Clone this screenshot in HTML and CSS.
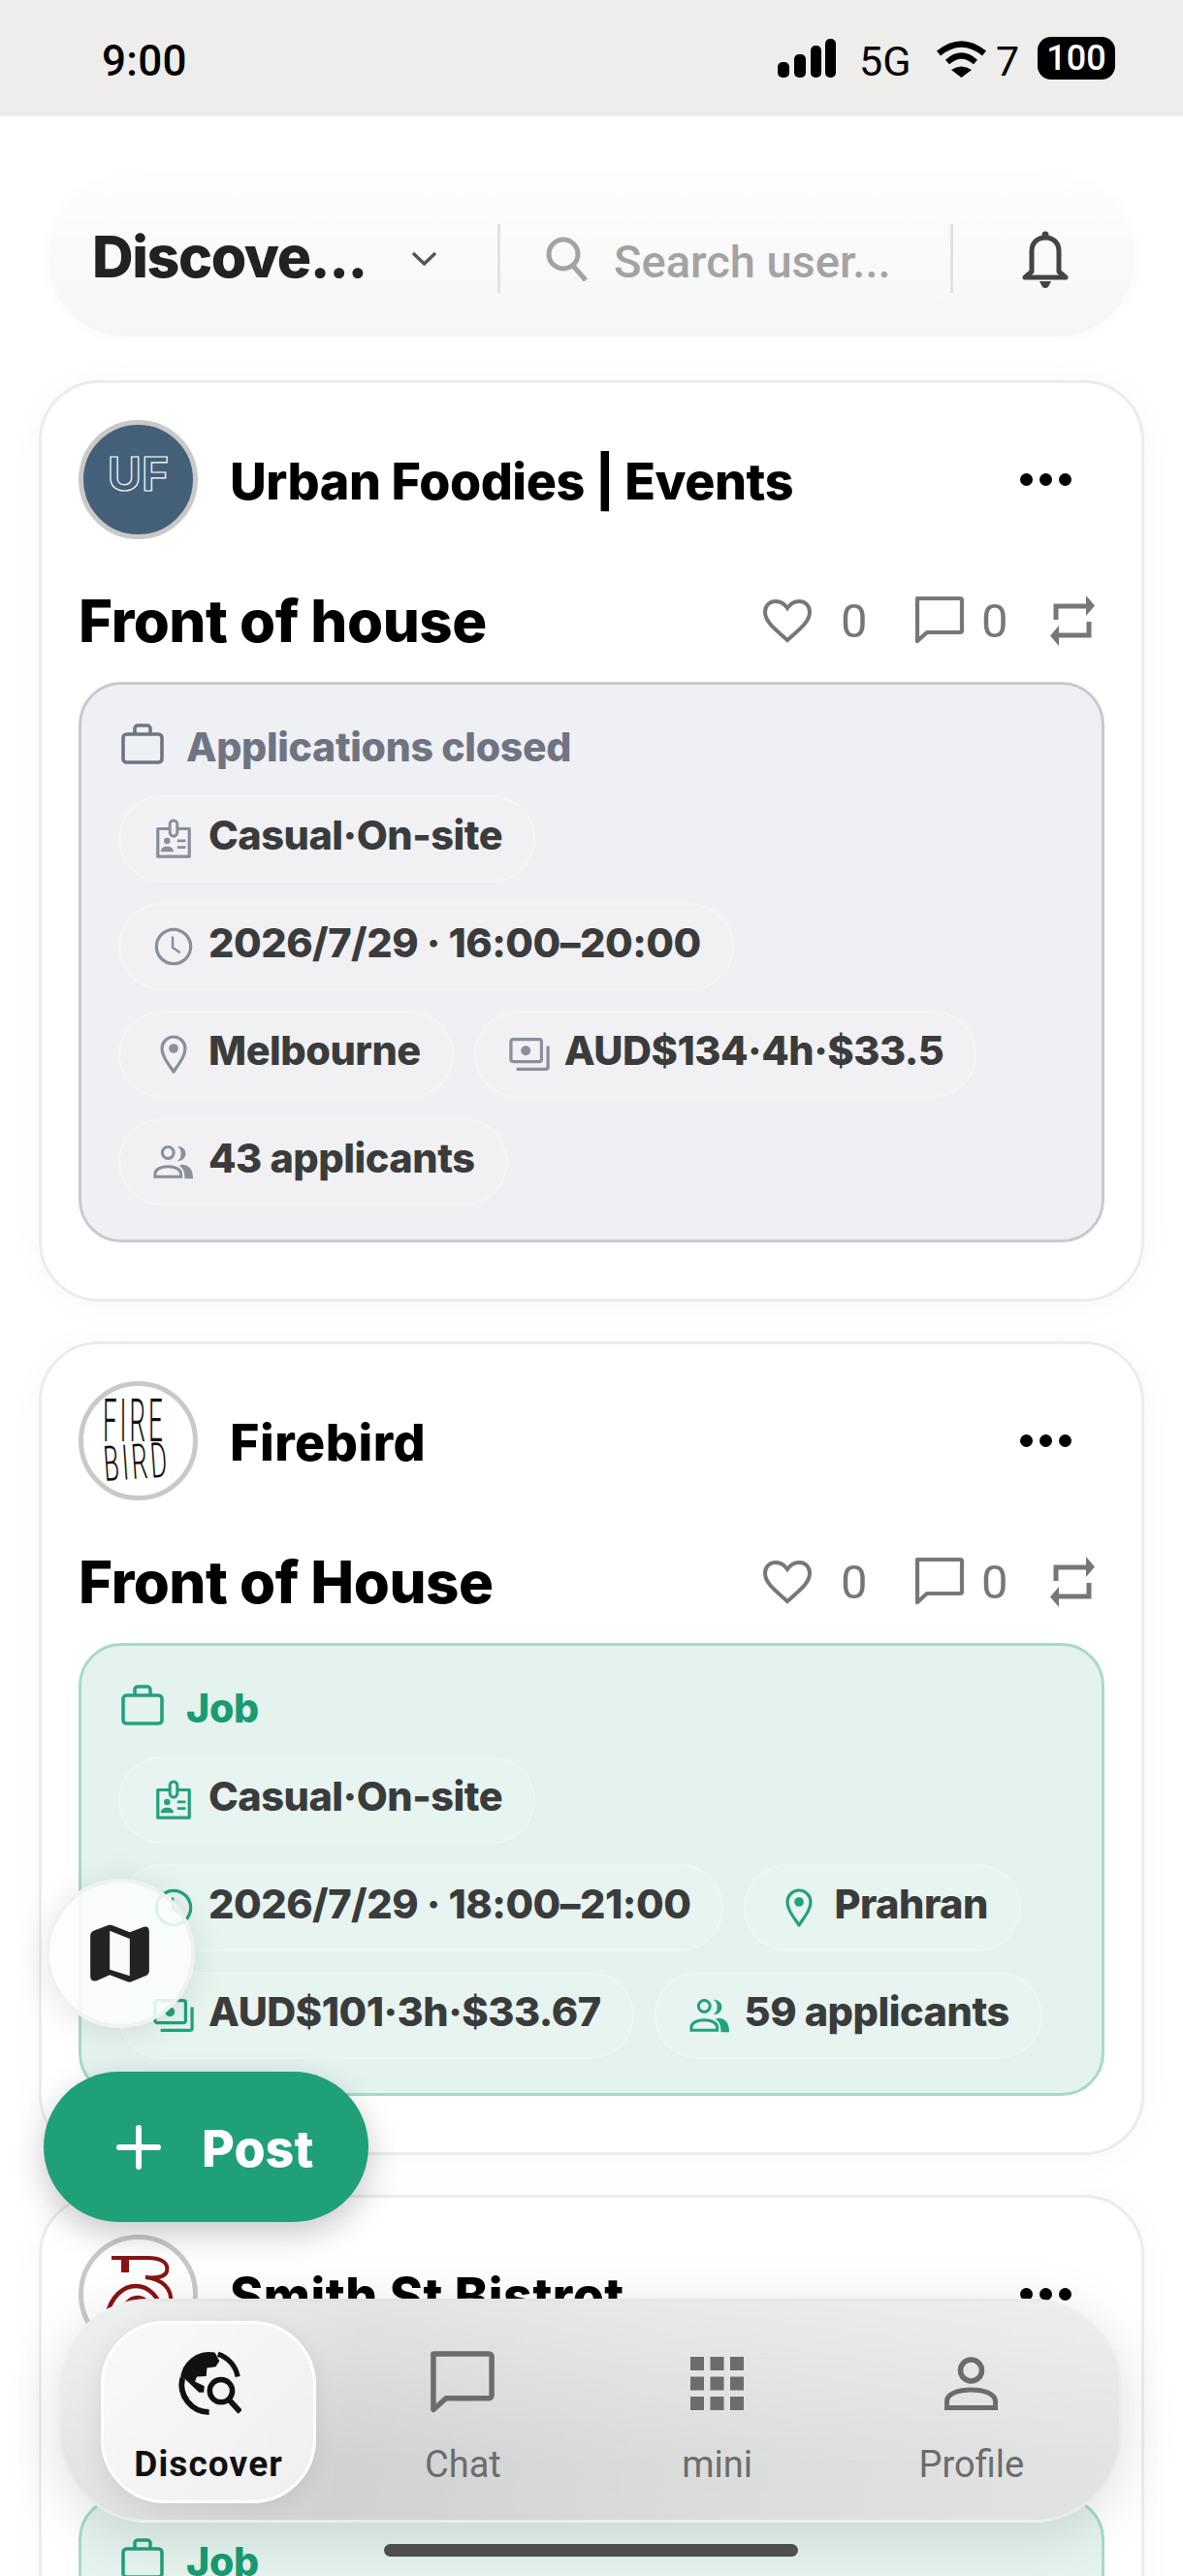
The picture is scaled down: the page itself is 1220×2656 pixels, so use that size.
FILE: index.html
```html
<!DOCTYPE html>
<html lang="en">
<head>
<meta charset="utf-8">
<title>Discover</title>
<link rel="stylesheet" href="styles.css">
</head>
<body>
<svg class="sprite" width="0" height="0" aria-hidden="true">
  <symbol id="i-bag" viewBox="0 0 44 42"><path d="M14 11V5a3 3 0 0 1 3-3h10a3 3 0 0 1 3 3v6" fill="none" stroke="currentColor" stroke-width="3.5"/><rect x="2" y="11" width="40" height="29" rx="3.5" fill="none" stroke="currentColor" stroke-width="3.6"/></symbol>
  <symbol id="i-badge" viewBox="0 0 40 44"><path d="M15 11H3v30h34V11H25" fill="none" stroke="currentColor" stroke-width="3.4" stroke-linejoin="round"/><rect x="16" y="2" width="8" height="17" rx="4" fill="none" stroke="currentColor" stroke-width="3.2"/><circle cx="13" cy="24" r="3.4" fill="currentColor"/><path d="M6 36c0-4 3-6 7-6s7 2 7 6z" fill="currentColor"/><path d="M24 24h9M24 31h9" stroke="currentColor" stroke-width="3"/></symbol>
  <symbol id="i-clock" viewBox="0 0 42 44"><circle cx="21" cy="22" r="18.500" fill="none" stroke="currentColor" stroke-width="3.4"/><path d="M20 11v12l8 5.500" fill="none" stroke="currentColor" stroke-width="2.6"/></symbol>
  <symbol id="i-pin" viewBox="0 0 30 42"><path d="M15 39C9 30 3 23 3 15a12 12 0 0 1 24 0c0 8-6 15-12 24z" fill="none" stroke="currentColor" stroke-width="3.2" stroke-linejoin="round"/><circle cx="15" cy="15" r="4.800" fill="currentColor"/></symbol>
  <symbol id="i-money" viewBox="0 0 44 36"><rect x="2" y="2" width="33" height="24" rx="2.500" fill="none" stroke="currentColor" stroke-width="3.4"/><circle cx="18" cy="14" r="5.200" fill="currentColor"/><path d="M42 9v23a2 2 0 0 1-2 2H8" fill="none" stroke="currentColor" stroke-width="3.4"/></symbol>
  <symbol id="i-people" viewBox="0 0 44 38"><circle cx="16" cy="9" r="6.200" fill="none" stroke="currentColor" stroke-width="3.2"/><path d="M2 35v-3c0-5 6-8 14-8s14 3 14 8v3z" fill="none" stroke="currentColor" stroke-width="3.2"/><path d="M26 2c6 0 9 4 9 8s-3 8-9 8c3-2 4-5 4-8s-1-6-4-8z" fill="currentColor"/><path d="M32 22c7 1 11 5 11 15h-9c0-6-1-11-6-14z" fill="currentColor"/></symbol>
  <symbol id="i-comment" viewBox="0 0 52 52"><path d="M3 3h44a2 2 0 0 1 2 2v31a2 2 0 0 1-2 2H13L3 47z" fill="none" stroke="currentColor" stroke-width="4.2" stroke-linejoin="round"/></symbol>
</svg>

<div class="screen">
  <header class="statusbar">
    <span class="status-time">9:00</span>
    <div class="status-right">
      <svg class="i-signal" viewBox="0 0 60 40"><rect x="0" y="24" width="12" height="16" rx="5"/><rect x="17" y="16" width="12" height="24" rx="5"/><rect x="34" y="7" width="11" height="33" rx="5"/><rect x="49" y="0" width="11" height="40" rx="5"/></svg>
      <span class="status-5g">5G</span>
      <svg class="i-wifi" viewBox="0 0 53 40"><path d="M3 15Q26.500-4 50 15" fill="none" stroke="#000" stroke-width="6.500"/><path d="M12 24Q26.500 11 41 24" fill="none" stroke="#000" stroke-width="6"/><path d="M16 32Q26.500 25 37 32L26.500 40z"/></svg>
      <span class="status-7">7</span>
      <span class="battery">100</span>
    </div>
  </header>

  <div class="topbar">
    <span class="topbar-title">Discove...</span>
    <svg class="i-chevron" viewBox="0 0 27 15"><path d="M2 2l11.500 11L25 2" fill="none" stroke="#555" stroke-width="3.400"/></svg>
    <span class="topbar-divider"></span>
    <svg class="i-search" viewBox="0 0 44 46"><circle cx="18" cy="18" r="15" fill="none" stroke="#a3a3a3" stroke-width="5"/><path d="M28 30l13 15" stroke="#a3a3a3" stroke-width="5"/></svg>
    <span class="topbar-search">Search user...</span>
    <span class="topbar-divider topbar-divider--end"></span>
    <svg class="i-bell" viewBox="0 0 50 60"><circle cx="25" cy="5" r="3.500" fill="#444"/><path d="M11 43V22c0-9 6-14 14-14s14 5 14 14v21l7 6H4z" fill="none" stroke="#444" stroke-width="5" stroke-linejoin="round"/><path d="M19 53h12l-2.500 5a4 4 0 0 1-7 0z" fill="#444"/></svg>
  </div>

  <main class="feed">
    <article class="card">
      <div class="card-head">
        <div class="avatar avatar--uf">
          <svg viewBox="0 0 113 113"><text x="56.500" y="68" class="uf-text" text-anchor="middle">UF</text></svg>
        </div>
        <h2 class="card-name">Urban Foodies | Events</h2>
        <div class="dots"><i></i><i></i><i></i></div>
      </div>
      <div class="card-title-row">
        <h3 class="card-title">Front of house</h3>
        <div class="actions">
          <svg class="i-heart" viewBox="0 0 52 46"><path d="M26 43C10 29 3 23 3 14 3 7 8 3 14 3c5 0 9 2.500 12 7 3-4.500 7-7 12-7 6 0 11 4 11 11 0 9-7 15-23 29z" fill="none" stroke="currentColor" stroke-width="4"/></svg>
          <span class="count count--like">0</span>
          <svg class="i-comment"><use href="#i-comment"/></svg>
          <span class="count count--comment">0</span>
          <svg class="i-repost" viewBox="0 0 48 52"><path d="M7 25V11h32M41 27v14H9" fill="none" stroke="currentColor" stroke-width="5"/><path d="M38 0l9 10.500-9 10.500zM10 31l-9 10.500L10 52z" fill="currentColor"/></svg>
        </div>
      </div>
      <section class="box box--closed">
        <div class="box-label"><svg class="i-bag"><use href="#i-bag"/></svg><span>Applications closed</span></div>
        <div class="chips">
          <div class="chip"><svg class="chip-icon"><use href="#i-badge"/></svg><span>Casual·On-site</span></div>
          <div class="chip"><svg class="chip-icon"><use href="#i-clock"/></svg><span>2026/7/29 · 16:00–20:00</span></div>
          <div class="chip"><svg class="chip-icon"><use href="#i-pin"/></svg><span>Melbourne</span></div>
          <div class="chip"><svg class="chip-icon"><use href="#i-money"/></svg><span>AUD$134·4h·$33.5</span></div>
          <div class="chip"><svg class="chip-icon"><use href="#i-people"/></svg><span>43 applicants</span></div>
        </div>
      </section>
    </article>

    <article class="card">
      <div class="card-head">
        <div class="avatar">
          <svg viewBox="0 0 113 113"><text class="fb-text" transform="translate(20 57) scale(1 2.35)">FIRE</text><text class="fb-text" transform="translate(22 98) rotate(-4) scale(1 1.95)">BIRD</text></svg>
        </div>
        <h2 class="card-name card-name--loose">Firebird</h2>
        <div class="dots"><i></i><i></i><i></i></div>
      </div>
      <div class="card-title-row">
        <h3 class="card-title">Front of House</h3>
        <div class="actions">
          <svg class="i-heart" viewBox="0 0 52 46"><path d="M26 43C10 29 3 23 3 14 3 7 8 3 14 3c5 0 9 2.500 12 7 3-4.500 7-7 12-7 6 0 11 4 11 11 0 9-7 15-23 29z" fill="none" stroke="currentColor" stroke-width="4"/></svg>
          <span class="count count--like">0</span>
          <svg class="i-comment"><use href="#i-comment"/></svg>
          <span class="count count--comment">0</span>
          <svg class="i-repost" viewBox="0 0 48 52"><path d="M7 25V11h32M41 27v14H9" fill="none" stroke="currentColor" stroke-width="5"/><path d="M38 0l9 10.500-9 10.500zM10 31l-9 10.500L10 52z" fill="currentColor"/></svg>
        </div>
      </div>
      <section class="box box--job">
        <div class="box-label"><svg class="i-bag"><use href="#i-bag"/></svg><span>Job</span></div>
        <div class="chips">
          <div class="chip"><svg class="chip-icon"><use href="#i-badge"/></svg><span>Casual·On-site</span></div>
          <div class="chip"><svg class="chip-icon"><use href="#i-clock"/></svg><span>2026/7/29 · 18:00–21:00</span></div>
          <div class="chip"><svg class="chip-icon"><use href="#i-pin"/></svg><span>Prahran</span></div>
          <div class="chip"><svg class="chip-icon"><use href="#i-money"/></svg><span>AUD$101·3h·$33.67</span></div>
          <div class="chip"><svg class="chip-icon"><use href="#i-people"/></svg><span>59 applicants</span></div>
        </div>
      </section>
    </article>

    <article class="card">
      <div class="card-head">
        <div class="avatar">
          <svg viewBox="0 0 113 113"><path d="M29 19H66C82 19 88 25 86 33 84 39 74 40 64 39 81 41 92 50 90 66" fill="none" stroke="#8a1414" stroke-width="4"/><rect x="39" y="19" width="8" height="15" fill="#8a1414"/><path d="M24 80C28 58 42 48 54 48S80 58 82 80M36 82C40 68 48 60 56 60S70 68 72 80" fill="none" stroke="#8a1414" stroke-width="4.500"/></svg>
        </div>
        <h2 class="card-name card-name--loose">Smith St Bistrot</h2>
        <div class="dots"><i></i><i></i><i></i></div>
      </div>
      <div class="card-title-row"></div>
      <section class="box box--job">
        <div class="box-label"><svg class="i-bag"><use href="#i-bag"/></svg><span>Job</span></div>
      </section>
    </article>
  </main>

  <button class="fab-map" type="button" aria-label="Map">
    <svg viewBox="70 65 185 183"><path d="M70 100q0-10 10-15l45-17q6-2 12 0l55 22 43-17q17-4 17 15v122q0 10-10 14l-45 19q-6 2-12 0l-55-21-40 18q-20 4-20-15z" fill="#222423"/><path d="M130 85l62 25v115l-62-20z" fill="#f8fbfa"/></svg>
  </button>

  <button class="fab-post" type="button">
    <svg viewBox="0 0 46 46"><path d="M23 3v40M3 23h40" stroke="#fff" stroke-width="6" stroke-linecap="round"/></svg>
    <span>Post</span>
  </button>

  <nav class="tabbar">
    <a class="tab tab--active">
      <svg class="tab-icon" viewBox="60 65 210 210"><path d="M75 160A92 92 0 0 1 185 73l15 27-12 18-28 4-2 26-30 2-6 15 30 15-2 20h-15L88 155z" fill="#111"/><path d="M82 155a88 88 0 0 0 85 108" fill="none" stroke="#111" stroke-width="18"/><path d="M195 78a92 92 0 0 1 63 72" fill="none" stroke="#111" stroke-width="16"/><circle cx="205" cy="195" r="36" fill="none" stroke="#111" stroke-width="17"/><path d="M232 225l34 37" stroke="#111" stroke-width="18"/></svg>
      <span>Discover</span>
    </a>
    <a class="tab">
      <svg class="tab-icon tab-icon--chat"><use href="#i-comment"/></svg>
      <span>Chat</span>
    </a>
    <a class="tab">
      <svg class="tab-icon tab-icon--small" viewBox="0 0 55 55" fill="currentColor"><rect x="0" y="0" width="14" height="14"/><rect x="20.500" y="0" width="14" height="14"/><rect x="41" y="0" width="14" height="14"/><rect x="0" y="20.500" width="14" height="14"/><rect x="20.500" y="20.500" width="14" height="14"/><rect x="41" y="20.500" width="14" height="14"/><rect x="0" y="41" width="14" height="14"/><rect x="20.500" y="41" width="14" height="14"/><rect x="41" y="41" width="14" height="14"/></svg>
      <span>mini</span>
    </a>
    <a class="tab">
      <svg class="tab-icon tab-icon--small" viewBox="0 0 55 55"><circle cx="27.500" cy="14" r="11" fill="none" stroke="currentColor" stroke-width="5.500"/><path d="M2.500 52.500V46c0-8 12-12 25-12s25 4 25 12v6.500z" fill="none" stroke="currentColor" stroke-width="5"/></svg>
      <span>Profile</span>
    </a>
  </nav>
  <div class="home-indicator"></div>
</div>
</body>
</html>
```

FILE: styles.css
```css
* { box-sizing: border-box; }
html, body { margin: 0; padding: 0; background: #fff; }
body { font-family: "Inter", "Liberation Sans", sans-serif; color: #000; }
.sprite { position: absolute; }
.screen { position: relative; width: 1220px; height: 2656px; overflow: hidden; background: #fff; }

/* status bar */
.statusbar { display: flex; align-items: center; justify-content: space-between; height: 120px; padding: 0 70px 0 105px; background: #eeedeb; font-family: "Roboto", sans-serif; }
.status-time { padding-top: 6px; font-size: 44px; font-weight: 500; letter-spacing: .3px; }
.status-right { display: flex; align-items: center; }
.i-signal { width: 60px; height: 40px; margin-right: 24px; }
.status-5g { width: 52px; margin-right: 27px; padding-top: 6px; font-size: 43px; }
.i-wifi { width: 53px; height: 40px; margin-right: 9px; }
.status-7 { width: 21px; margin-right: 22px; padding-top: 6px; font-size: 43px; }
.battery { display: flex; align-items: center; justify-content: center; width: 80px; height: 44px; border-radius: 14px; background: #000; color: #fff; font-size: 36px; font-weight: 500; }

/* top bar */
.topbar { display: flex; align-items: center; width: 1120px; height: 161px; margin: 66px 0 0 50px; padding-left: 45px; border-radius: 80px; background: linear-gradient(#fdfdfd, #f6f6f6); box-shadow: 0 0 12px 4px #fbfbfb; }
.topbar-title { width: 281px; padding-bottom: 5px; font-size: 59px; font-weight: 800; letter-spacing: -1.4px; color: #222; white-space: nowrap; }
.i-chevron { width: 27px; height: 15px; margin-left: 48px; }
.topbar-divider { width: 3px; height: 71px; margin-left: 62px; background: #e2e2e2; }
.i-search { width: 44px; height: 46px; margin-left: 47px; }
.topbar-search { margin-left: 26px; width: 347px; padding-top: 6px; font-family: "Roboto", sans-serif; font-size: 47px; font-weight: 500; color: #a3a3a3; white-space: nowrap; }
.topbar-divider--end { margin-left: 0; }
.i-bell { width: 50px; height: 60px; margin-left: 70px; }

/* feed */
.feed { display: flex; flex-direction: column; gap: 41px; padding: 45px 40px 0; }
.card { padding: 38px 38px 58px; border: 3px solid #ececec; border-radius: 62px; background: #fff; box-shadow: 0 2px 34px rgba(0, 0, 0, .035); }
.card-head { display: flex; align-items: center; height: 123px; }
.avatar { flex: none; width: 123px; height: 123px; border: 5px solid #c9c9c9; border-radius: 50%; background: #fff; overflow: hidden; }
.avatar svg { display: block; width: 100%; height: 100%; }
.avatar--uf { background: #436078; }
.uf-text { font-family: "Inter", sans-serif; font-size: 48px; font-weight: 700; fill: #436078; stroke: #fff; stroke-width: 1.2px; }
.fb-text { font-family: "Roboto", sans-serif; font-size: 26px; font-weight: 300; fill: #111; letter-spacing: 3px; }
.card-name { margin: 5px 0 0 33px; font-size: 52px; font-weight: 800; letter-spacing: -.45px; line-height: 1.2; white-space: nowrap; }
.card-name--loose { letter-spacing: .5px; }
.dots { display: flex; gap: 7px; margin: 0 34px 0 auto; }
.dots i { display: block; width: 13px; height: 13px; border-radius: 50%; background: #000; }
.card-title-row { display: flex; align-items: center; justify-content: space-between; height: 80px; margin: 44px 0 23px; }
.card-title { margin: 0; font-size: 60px; font-weight: 800; letter-spacing: -.5px; line-height: 80px; white-space: nowrap; }
.actions { display: flex; align-items: center; padding-right: 9px; color: #777; }
.i-heart { width: 52px; height: 46px; }
.i-comment { width: 52px; height: 52px; margin-left: 50px; }
.i-repost { width: 48px; height: 52px; margin-left: 44px; }
.count { width: 26px; font-family: "Roboto", sans-serif; font-size: 49px; font-weight: 400; line-height: 1; }
.count--like { margin-left: 29px; }
.count--comment { margin-left: 17px; }

/* info box */
.box { padding: 36px 38px 35px; border: 3px solid; border-radius: 44px; }
.box--closed { background: #eff0f3; border-color: #c8c9cf; --accent: #8a8f9b; --label: #6e7482; }
.box--job { background: #e4f3ee; border-color: #a8d9c8; --accent: #22a27c; --label: #1a9b72; }
.box-label { display: flex; align-items: center; gap: 23px; height: 50px; margin: 0 0 28px 3px; color: var(--label); font-size: 41px; font-weight: 800; letter-spacing: -.3px; white-space: nowrap; }
.box-label span { padding-top: 6px; }
.i-bag { flex: none; width: 44px; height: 42px; color: var(--accent); }
.box--closed .i-bag { color: var(--label); }
.chips { display: flex; flex-wrap: wrap; gap: 21px; }
.chip { display: flex; align-items: center; gap: 15px; height: 90px; padding: 0 32px 0 34px; border: 2px solid rgba(255, 255, 255, .22); border-radius: 45px; background: rgba(255, 255, 255, .12); color: #3a3c3c; font-size: 41.500px; font-weight: 800; letter-spacing: -.5px; white-space: nowrap; }
.chip span { padding-bottom: 9px; }
.chip-icon { flex: none; width: 42px; height: 42px; color: var(--accent); }

/* floating buttons */
.fab-map { position: absolute; left: 47px; top: 1937px; display: flex; align-items: center; justify-content: center; width: 154px; height: 154px; padding: 0; border: 4px solid rgba(238, 240, 239, .9); border-radius: 50%; background: rgba(252, 253, 253, .88); box-shadow: 0 4px 36px rgba(0, 0, 0, .1); }
.fab-map svg { width: 62px; height: 61px; }
.fab-post { position: absolute; left: 45px; top: 2136px; display: flex; align-items: center; gap: 42px; width: 335px; height: 155px; padding: 0 0 0 75px; border: 0; border-radius: 78px; background: #1fa079; box-shadow: 0 12px 34px rgba(0, 0, 0, .22); color: #fff; font-family: "Inter", sans-serif; font-size: 52px; font-weight: 800; }
.fab-post span { padding-top: 3px; }
.fab-post svg { width: 46px; height: 46px; }

/* tab bar */
.tabbar { position: absolute; left: 61px; top: 2370px; display: flex; gap: 40px; width: 1096px; height: 231px; padding: 20px 41px 0 40px; border: 3px solid rgba(240, 241, 241, .5); border-radius: 92px; background: linear-gradient(180deg, rgba(255, 255, 255, .4), rgba(255, 255, 255, 0) 75%), linear-gradient(100deg, #e6e7e7 0%, #d0d2d1 28%, #d9dbda 55%, #e2e3e3 100%); box-shadow: 0 12px 60px rgba(0, 0, 0, .13); }
.tab { display: flex; flex-direction: column; align-items: center; width: 223px; height: 188px; padding-top: 27px; border: 3px solid transparent; border-radius: 66px; color: #6c6c6c; font-family: "Roboto", sans-serif; font-size: 38px; font-weight: 400; line-height: 44px; }
.tab span { margin-top: 28px; }
.tab-icon { flex: none; width: 68px; height: 68px; }
.tab-icon--small { width: 55px; height: 55px; margin: 7px 0 6px; }
.tab--active { border-color: #fff; background: linear-gradient(135deg, #f9f9f9, #efefef); box-shadow: 0 6px 24px rgba(0, 0, 0, .08); color: #111; font-size: 37px; font-weight: 700; letter-spacing: 1.100px; }
.home-indicator { position: absolute; left: 396px; top: 2623px; width: 427px; height: 13px; border-radius: 7px; background: #4c4f4e; }
```
